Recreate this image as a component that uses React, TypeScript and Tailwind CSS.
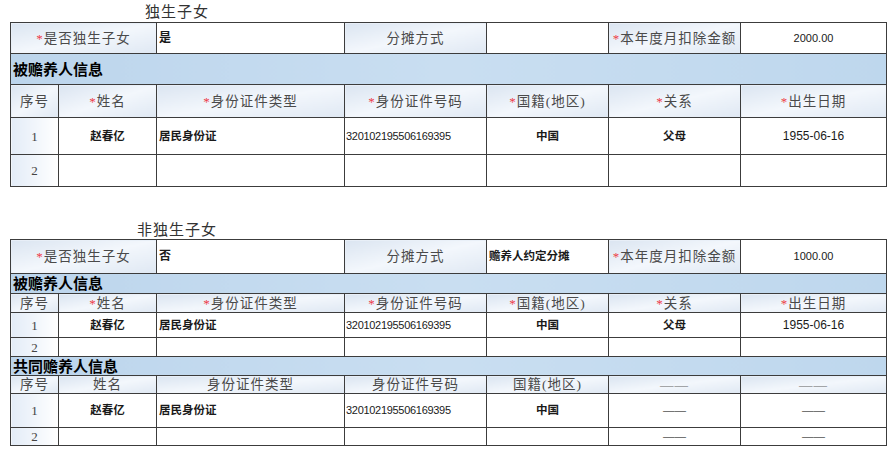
import React from "react"

const serif = "font-['Liberation_Serif','Noto_Sans_CJK_SC',serif]"
const sans = "font-['Liberation_Sans','Noto_Sans_CJK_SC',sans-serif]"

const line = "border border-[#3c3c3c] p-0 leading-[15px]"
const labelBg = "bg-gradient-to-br from-[#dbe5f1] via-[#f3f7fc] to-[#dfe8f3]"
const sectionBg = "bg-gradient-to-r from-[#bcd5ec] via-[#c9def1] to-[#bed7ed]"
const seqBg = "bg-gradient-to-r from-[#e3ecf7] to-[#ffffff]"

function Star() {
  return <span className="text-[#ee3b46] text-[13px]">*</span>
}

function Label({ children, star, colSpan, className = "" }: { children: React.ReactNode; star?: boolean; colSpan?: number; className?: string }) {
  return (
    <td colSpan={colSpan} className={`${line} ${labelBg} ${serif} text-center text-[13.5px] text-[#4a4a4a] tracking-[1px] ${className}`}>
      {star && <Star />}
      {children}
    </td>
  )
}

function Section({ title, h }: { title: string; h: string }) {
  return (
    <tr className={h}>
      <td colSpan={7} className={`${line} ${sectionBg} ${sans} text-[15px] font-bold text-black pl-[2px]`}>
        {title}
      </td>
    </tr>
  )
}

function Cols() {
  return (
    <colgroup>
      <col className="w-[48px]" />
      <col className="w-[98px]" />
      <col className="w-[188px]" />
      <col className="w-[142px]" />
      <col className="w-[122px]" />
      <col className="w-[132px]" />
      <col className="w-[146px]" />
    </colgroup>
  )
}

const dataCell = `${line} bg-white ${sans} text-[11.5px] text-[#1a1a1a]`

function Seq({ n }: { n: number }) {
  return <td className={`${line} ${seqBg} ${serif} text-center text-[13px] text-[#444]`}>{n}</td>
}

function PersonRow({ h, dash, rel }: { h: string; dash?: boolean; rel?: boolean }) {
  return (
    <tr className={h}>
      <Seq n={1} />
      <td className={`${dataCell} text-center font-semibold`}>赵春亿</td>
      <td className={`${dataCell} font-semibold pl-[2px]`}>居民身份证</td>
      <td className={`${dataCell} text-[11px] tracking-[-0.3px] pl-[1px]`}>320102195506169395</td>
      <td className={`${dataCell} text-center font-semibold`}>中国</td>
      {dash ? (
        <>
          <td className={`${dataCell} text-center text-[#555]`}>——</td>
          <td className={`${dataCell} text-center text-[#555]`}>——</td>
        </>
      ) : (
        <>
          <td className={`${dataCell} text-center font-semibold`}>{rel ? "父母" : ""}</td>
          <td className={`${dataCell} text-center text-[12px]`}>1955-06-16</td>
        </>
      )}
    </tr>
  )
}

function EmptyRow({ h, dash }: { h: string; dash?: boolean }) {
  return (
    <tr className={h}>
      <Seq n={2} />
      <td className={dataCell}></td>
      <td className={dataCell}></td>
      <td className={dataCell}></td>
      <td className={dataCell}></td>
      <td className={`${dataCell} text-center text-[#555]`}>{dash ? "——" : ""}</td>
      <td className={`${dataCell} text-center text-[#555]`}>{dash ? "——" : ""}</td>
    </tr>
  )
}

function HeaderRow({ h, star = true }: { h: string; star?: boolean }) {
  return (
    <tr className={h}>
      <Label>序号</Label>
      <Label star={star}>姓名</Label>
      <Label star={star}>身份证件类型</Label>
      <Label star={star}>身份证件号码</Label>
      <Label star={star}>国籍(地区)</Label>
      {star ? (
        <>
          <Label star>关系</Label>
          <Label star>出生日期</Label>
        </>
      ) : (
        <>
          <Label className="text-[#666] text-[12px]">——</Label>
          <Label className="text-[#666] text-[12px]">——</Label>
        </>
      )}
    </tr>
  )
}

function TopRow({ h, only, method, amount }: { h: string; only: string; method: string; amount: string }) {
  return (
    <tr className={h}>
      <Label star colSpan={2}>是否独生子女</Label>
      <td className={`${dataCell} font-semibold pl-[2px] text-[12px]`}>{only}</td>
      <Label>分摊方式</Label>
      <td className={`${dataCell} font-semibold pl-[2px] text-[10.5px]`}>{method}</td>
      <Label star>本年度月扣除金额</Label>
      <td className={`${dataCell} text-center text-[11px]`}>{amount}</td>
    </tr>
  )
}

export default function App() {
  return (
    <div className="w-[892px] h-[450px] bg-white overflow-hidden">
      {/* 独生子女 */}
      <div className={`w-[354px] h-[22px] text-center ${serif} text-[15px] text-[#333] leading-[22px] tracking-[1px] pt-[1px]`}>独生子女</div>
      <table className="ml-[10px] w-[876px] table-fixed border-collapse">
        <Cols />
        <tbody>
          <TopRow h="h-[31px]" only="是" method="" amount="2000.00" />
          <Section title="被赡养人信息" h="h-[31px]" />
          <HeaderRow h="h-[33px]" />
          <PersonRow h="h-[37px]" rel />
          <EmptyRow h="h-[32px]" />
        </tbody>
      </table>

      {/* 非独生子女 */}
      <div className={`mt-[34px] w-[354px] h-[18px] text-center ${serif} text-[15px] text-[#333] leading-[18px] tracking-[1px]`}>非独生子女</div>
      <table className="ml-[10px] w-[876px] table-fixed border-collapse">
        <Cols />
        <tbody>
          <TopRow h="h-[34px]" only="否" method="赡养人约定分摊" amount="1000.00" />
          <Section title="被赡养人信息" h="h-[20px]" />
          <HeaderRow h="h-[19px]" />
          <PersonRow h="h-[25px]" rel />
          <EmptyRow h="h-[19px]" />
          <Section title="共同赡养人信息" h="h-[19px]" />
          <HeaderRow h="h-[18px]" star={false} />
          <PersonRow h="h-[34px]" dash />
          <EmptyRow h="h-[18px]" dash />
        </tbody>
      </table>
    </div>
  )
}
